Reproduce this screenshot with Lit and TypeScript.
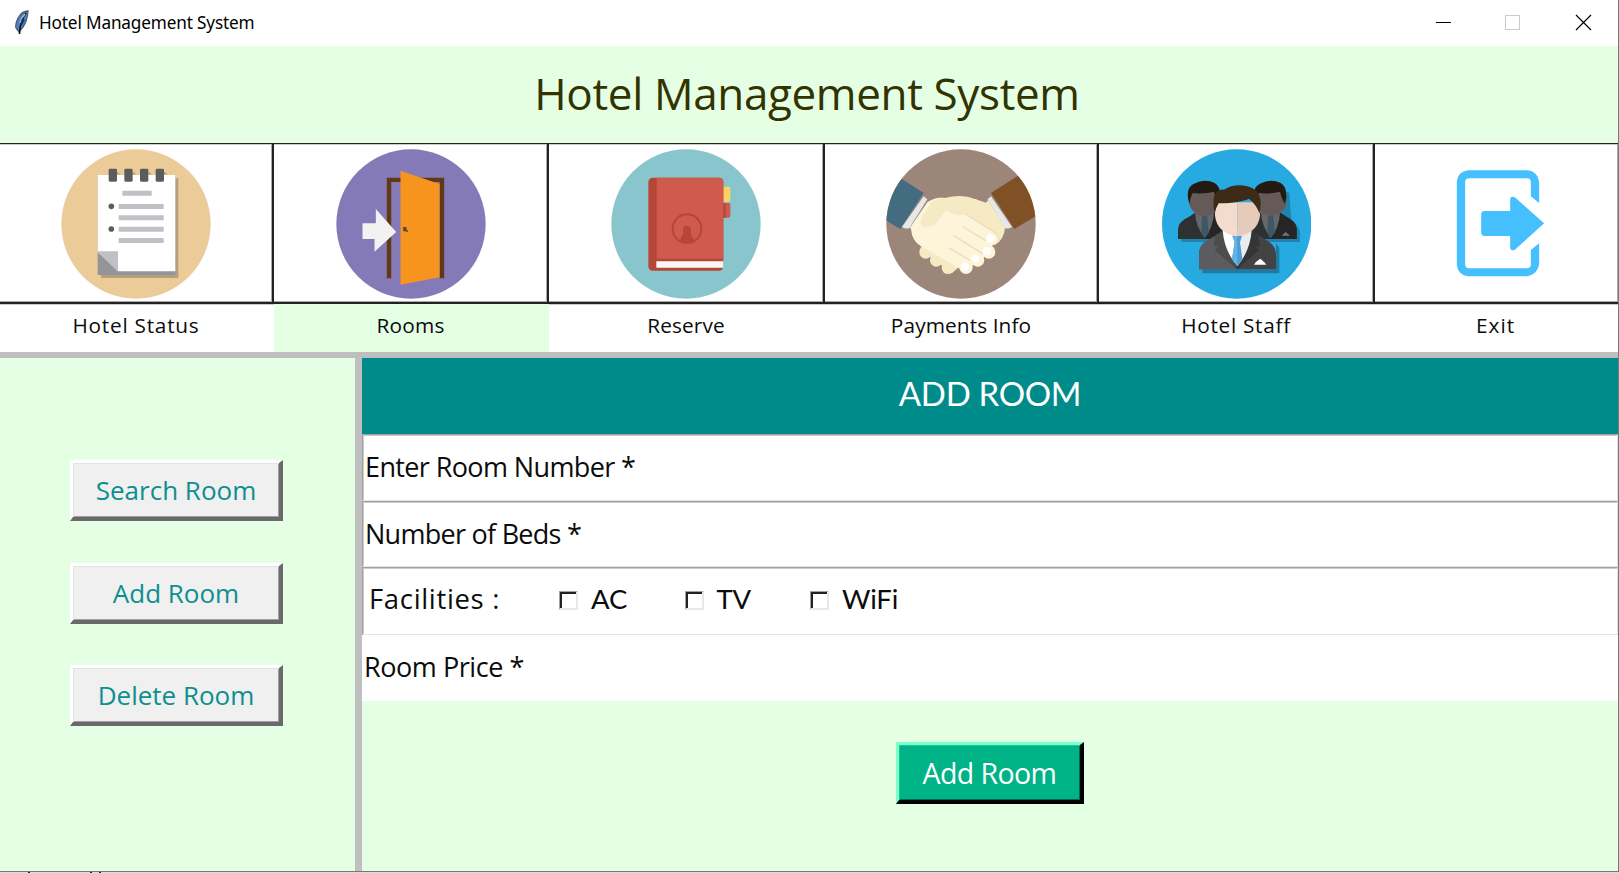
import { LitElement, html, svg, css } from "lit";
import { customElement } from "lit/decorators.js";

const notebook = html`<svg class="icon" viewBox="184 28 450 450">
  <circle cx="409" cy="253" r="224" fill="#ebcc98" />
  <path d="M304 116H536V415H304Z" fill="#b79f7b" />
  <path d="M294 106H527V406H294Z" fill="#94959a" />
  <path d="M294 106H527V395H355L294 336Z" fill="#fff" />
  <path d="M294 335H355V396Z" fill="#c0c0c5" />
  <path d="M351 98l12 6H351ZM399 98l12 6H399ZM446 98l12 6H446ZM493 98l12 6H493Z" fill="#a28d6d" />
  <g fill="#5b5c60">
    <rect x="327" y="87" width="25" height="39" rx="4" />
    <rect x="374" y="87" width="25" height="39" rx="4" />
    <rect x="421" y="87" width="25" height="39" rx="4" />
    <rect x="468" y="87" width="25" height="39" rx="4" />
    <circle cx="335" cy="200" r="8.5" />
    <circle cx="335" cy="268" r="8.5" />
  </g>
  <path d="M368 153H456V168H368ZM357 193H492V208H357ZM357 227H492V242H357ZM357 261H492V276H357ZM357 295H492V310H357Z" fill="#c0c0c5" />
</svg>`;

const door = html`<svg class="icon" viewBox="196.500 28 450 450">
  <circle cx="421.500" cy="253" r="224" fill="#857ab8" />
  <path d="M349 114H521V416H507V127H363V416H349Z" fill="#603813" />
  <path d="M363 127H507V416H363Z" fill="#857ab8" />
  <path d="M390 93L507 133V413L390 435Z" fill="#f7941e" />
  <path d="M398 262h10v7l5 6v3l-8-3h-7Z" fill="#5c4a33" />
  <path d="M276 251H316V208L377 277L312 336V298H276Z" fill="#f2f2f2" />
</svg>`;

const book = html`<svg class="icon" viewBox="200 28 450 450">
  <circle cx="425" cy="253" r="224" fill="#88c5cc" />
  <rect x="525" y="141" width="33" height="45" rx="5" fill="#fdd166" />
  <rect x="525" y="190" width="33" height="44" rx="5" fill="#cf5a4e" />
  <path d="M536 190h8v44h-8Z" fill="#b44738" />
  <rect x="312" y="114" width="225" height="279" rx="13" fill="#b44738" />
  <path d="M337 114H525a12 12 0 0 1 12 12V357H337Z" fill="#d05a4e" />
  <path d="M336 365H537V384H336Z" fill="#f7f7f7" />
  <circle cx="428" cy="267" r="43" fill="none" stroke="#b44738" stroke-width="6" />
  <circle cx="428" cy="270" r="12" fill="#b44738" />
  <path d="M420 274H436L449 302Q428 320 407 302Z" fill="#b44738" />
</svg>`;

const handshake = html`<svg class="icon" viewBox="198 28 450 450">
  <defs><clipPath id="disc"><circle cx="423" cy="253" r="224" /></clipPath></defs>
  <circle cx="423" cy="253" r="224" fill="#9c8679" />
  <g clip-path="url(#disc)">
    <path d="M245 117L311 160L241 268L190 238V180Z" fill="#446c80" />
    <path d="M594 108L513 160L583 268L655 225V180Z" fill="#805125" />
  </g>
  <path d="M311 170L322 179L268 266Q254 268 246 262Z" fill="#e6e7e8" />
  <path d="M513 170L503 179L554 266Q568 268 576 262Z" fill="#e6e7e8" />
  <g fill="#f6eac5">
    <circle cx="317" cy="338" r="19" />
    <circle cx="349" cy="362" r="19" />
    <circle cx="384" cy="384" r="19" />
    <path d="M304 320L420 380L396 400L300 330Z" />
    <path d="M326 188Q350 172 374 175Q425 161 465 178L498 189L504 181L555 264Q553 298 525 316L440 290L330 260Z" />
  </g>
  <g fill="#fdf4da">
    <path d="M322 188Q345 170 376 175L440 225L535 290L428 392L303 320Q276 305 273 268L270 264Z" />
    <circle cx="514" cy="296" r="20" />
    <circle cx="506" cy="337" r="20" />
    <circle cx="473" cy="361" r="20" />
    <circle cx="438" cy="383" r="20" />
    <path d="M440 225L528 281L512 338L473 366L438 392L420 388L400 300Z" />
  </g>
  <path d="M372 178H470L442 226Q404 231 379 212Q362 233 347 253Q326 268 309 260Q297 252 306 232L333 188Q350 173 374 175Z" fill="#f6eac5" />
  <path d="M440 225L520 275Q540 289 537 304M430 262L498 303M401 288L487 341M390 326L450 362" fill="none" stroke="#eadfba" stroke-width="4" stroke-linecap="round" />
  <g fill="#fff">
    <rect x="499" y="285" width="24" height="24" rx="9" transform="rotate(20 511 297)" />
    <rect x="489" y="322" width="23" height="23" rx="9" transform="rotate(20 500 333)" />
    <rect x="455" y="345" width="23" height="23" rx="9" transform="rotate(20 466 356)" />
    <rect x="424" y="369" width="23" height="23" rx="9" transform="rotate(20 435 380)" />
  </g>
</svg>`;

const backMan = svg`
  <path d="M250 298V268Q250 246 282 232L303 218H357L378 232Q408 246 408 268V298Z" fill="#2f3032" />
  <path d="M330 298V218H357L378 232Q408 246 408 268V298Z" fill="#262627" />
  <path d="M301 220H358Q355 265 330 295Q304 262 301 220Z" fill="#66676a" />
  <path d="M322 228H338L342 280L330 294L320 280Z" fill="#3f5666" />
  <ellipse cx="330" cy="185" rx="47" ry="43" fill="#655a57" />
  <path d="M284 192Q270 145 298 132Q330 116 360 130Q378 140 377 172L373 192Q364 180 358 156Q328 164 294 160Q286 175 284 192Z" fill="#231a12" />
`;

const staff = html`<svg class="icon" viewBox="199 28 450 450">
  <circle cx="426" cy="253" r="224" fill="#27aae1" />
  <path d="M260 298H370V307H260ZM500 307H616V275Q606 250 590 240L584 160L560 150V298H500Z" fill="#1f83ad" />
  ${backMan}
  <g transform="translate(198 0)">${backMan}</g>
  <path d="M561 288L573 277L586 288Z" fill="#777" />
  <path d="M323 389H544V310L554 325V401H323Z" fill="#1f7ba4" />
  <path d="M313 389V345Q313 315 340 302L380 276H476L516 302Q544 318 544 345V389Z" fill="#434343" />
  <path d="M313 389V345Q313 315 340 302L380 276H428V389Z" fill="#5c5b60" />
  <path d="M380 274L361 288L359 318L372 320L362 332L428 389L493 332L483 320L497 318L491 288L474 274Z" fill="#343635" />
  <path d="M361 288L359 318L372 320L362 332L425 387L385 274Z" fill="#4b4e4d" />
  <path d="M384 272H428V380Q388 332 384 272Z" fill="#fff" />
  <path d="M428 272H471Q467 332 428 380Z" fill="#e9ebf0" />
  <path d="M413 288H442L436 308L443 358L428 380L412 358L420 308Z" fill="#4c9cd6" />
  <path d="M413 288H428V380L412 358L420 308Z" fill="#65b0e5" />
  <path d="M361 188H428V290Q367 280 361 228Z" fill="#f3dccd" />
  <path d="M428 188H496V228Q489 280 428 290Z" fill="#e6cbbb" />
  <path d="M360 222Q350 175 365 158Q375 147 388 150Q412 135 440 137Q498 142 498 192L495 222Q485 195 463 177Q440 189 372 191Q363 205 360 222Z" fill="#3e2b17" />
  <path d="M478 375Q482 366 497 357Q509 366 515 375Z" fill="#fff" />
</svg>`;

const exit = html`<svg class="icon" viewBox="184.500 28 450 450">
  <path d="M511 170V128Q511 116 499 116H326Q314 116 314 128V374Q314 386 326 386H499Q511 386 511 374V331L536 311V374Q532 402 503 410H322Q293 406 289 377V125Q293 96 322 92H503Q532 97 536 127V190Z" fill="#46bfff" />
  <path d="M362 223Q363 214 372 214H449V178Q451 167 463 173L551 251L463 330Q451 336 449 324V289H372Q363 288 362 280Z" fill="#46bfff" />
</svg>`;

interface Tab { label: string; spacing: number; icon: unknown; active?: boolean; }
const tabs: Tab[] = [
  { label: "Hotel Status", spacing: 0.75, icon: notebook },
  { label: "Rooms", spacing: 0.2, icon: door, active: true },
  { label: "Reserve", spacing: 0.1, icon: book },
  { label: "Payments Info", spacing: 0.1, icon: handshake },
  { label: "Hotel Staff", spacing: 0.7, icon: staff },
  { label: "Exit", spacing: 1, icon: exit },
];

@customElement("app-root")
export class AppRoot extends LitElement {
  static styles = css`
    :host {
      display: block;
      height: 873px;
      overflow: hidden;
      background: #fff;
      color: #0c0c0c;
      font-family: "Open Sans", "Noto Sans", sans-serif;
      white-space: nowrap;
    }
    * { box-sizing: border-box; }
    .window {
      display: grid;
      grid-template-rows: 46px 97px 209px 6px 1fr;
      height: 872px;
      border-right: 1px solid #777;
      border-bottom: 1px solid #777;
    }
    .titlebar {
      display: flex;
      align-items: center;
      font: 17.2px/46px "Noto Sans", sans-serif;
      letter-spacing: -0.16px;
      color: #000;
    }
    .feather { width: 14px; height: 25px; margin: 0 10px 2px 15px; }
    .caption { flex: 1; }
    .controls { width: 183px; height: 46px; }
    .header {
      background: #e5ffe5;
      color: #333300;
      font-size: 44px;
      line-height: 95px;
      letter-spacing: -0.36px;
      text-align: center;
      padding-right: 4px;
    }
    .tabs { display: grid; grid-template-columns: 274px 275px 276px 274px 276px 1fr; }
    .tab { display: grid; grid-template-rows: 161px 48px; }
    .pic {
      display: flex;
      align-items: center;
      justify-content: center;
      border: solid #222;
      border-width: 1px 2px 2px 0;
      box-shadow: inset -1px -1px #aaa, inset 0 1px #ccc, 0 1px #ccc;
      padding-top: 1px;
    }
    .tab:last-child .pic { border-right: 0; }
    .icon { width: 150px; height: 150px; flex: none; }
    .name { font-size: 20.8px; line-height: 43px; text-align: center; padding-right: 2px; }
    .active .name { background: #e5ffe5; }
    .bar { background: #bfbfbf; }
    .body { display: grid; grid-template-columns: 355px 7px 1fr; background: #e5ffe5; }
    .side { padding: 102px 0 0 70px; display: flex; flex-direction: column; gap: 41.500px; }
    button {
      display: block;
      width: 213px;
      height: 61px;
      padding: 0;
      margin: 0;
      font: 26px/52px "Open Sans", sans-serif;
      color: #0c8f8f;
      background: #f0f0f0;
      border: solid;
      border-width: 3px 4px 4px 3px;
      border-color: #fff #696969 #696969 #fff;
      box-shadow: inset 1px 1px #e3e3e3, inset -1px -1px #a0a0a0;
    }
    .heading {
      height: 76px;
      background: #008b8b;
      color: #fff;
      font: 33px/70px "Lato", sans-serif;
      letter-spacing: -0.32px;
      text-align: center;
    }
    .row {
      background: #fff;
      font-size: 27px;
      border: 1px solid;
      border-color: #a0a0a0 #e3e3e3 #e3e3e3 #a0a0a0;
      box-shadow: inset 1px 1px #ccc;
      padding-left: 2px;
    }
    .number { height: 67px; line-height: 63px; letter-spacing: -0.62px; }
    .beds { height: 66px; line-height: 63px; letter-spacing: -0.73px; }
    .facilities { height: 68px; line-height: 62px; font-size: 27.5px; display: flex; }
    .facilities .lead { width: 194px; padding-left: 4px; letter-spacing: 0.66px; }
    .price { height: 66px; line-height: 62px; letter-spacing: -0.44px; border-color: #fff; box-shadow: none; padding-left: 1px; }
    .option { display: flex; width: 125.500px; gap: 13px; font-family: "Lato", sans-serif; letter-spacing: -0.2px; }
    .box {
      width: 19px;
      height: 19px;
      margin-top: 23px;
      border: solid;
      border-width: 1px 2px 2px 1px;
      border-color: #a0a0a0 #e8e8e8 #e8e8e8 #a0a0a0;
      box-shadow: inset 2px 2px #222;
    }
    .submit {
      width: 188px;
      height: 62px;
      margin: 41px auto 0;
      font-size: 28.5px;
      letter-spacing: -0.6px;
      color: #fff;
      background: #00b386;
      border-color: #7dffc8 #000 #000 #7dffc8;
      box-shadow: inset 1px 1px #1cc596, inset -1px -1px #00694f;
    }
    .under { display: flex; height: 1px; background: #ddd; }
    .tick { width: 2px; margin-left: 28px; background: #222; }
    .tick + .tick { margin-left: 60px; }
    .tick + .tick + .tick { margin-left: 7px; }
  `;

  render() {
    return html`
      <div class="window">
        <div class="titlebar">
          <svg class="feather" viewBox="0 0 14 25">
            <path d="M13 1Q7 1 3 8Q0 14 1 18L4 22L8 17Q12 12 13 1Z" fill="#4b82c4" stroke="#555c66" stroke-width="1.300" />
            <path d="M11 3Q5 10 4.500 24" fill="none" stroke="#111" stroke-width="1.600" />
            <path d="M10 4Q6 8 5 13" fill="none" stroke="#9cc7f2" stroke-width="1.200" />
            <path d="M9 9L6 15" stroke="#16386a" stroke-width="2" />
          </svg>
          <span class="caption">Hotel Management System</span>
          <svg class="controls" viewBox="0 0 183 46" fill="none">
            <path d="M1 22.500H16" stroke="#000" />
            <rect x="70.500" y="15.500" width="14" height="14" stroke="#ccc" />
            <path d="M141 15L156 30M156 15L141 30" stroke="#000" stroke-width="1.200" />
          </svg>
        </div>
        <div class="header">Hotel Management System</div>
        <div class="tabs">
          ${tabs.map((t) => html`
            <div class="tab ${t.active ? "active" : ""}">
              <div class="pic">${t.icon}</div>
              <div class="name" style="letter-spacing:${t.spacing}px">${t.label}</div>
            </div>`)}
        </div>
        <div class="bar"></div>
        <div class="body">
          <div class="side">
            <button>Search Room</button>
            <button>Add Room</button>
            <button>Delete Room</button>
          </div>
          <div class="bar"></div>
          <div class="main">
            <div class="heading">ADD ROOM</div>
            <div class="row number">Enter Room Number *</div>
            <div class="row beds">Number of Beds *</div>
            <div class="row facilities">
              <span class="lead">Facilities :</span>
              ${["AC", "TV", "WiFi"].map((o) => html`<span class="option"><span class="box"></span>${o}</span>`)}
            </div>
            <div class="row price">Room Price *</div>
            <button class="submit">Add Room</button>
          </div>
        </div>
      </div>
      <div class="under"><span class="tick"></span><span class="tick"></span><span class="tick"></span></div>
    `;
  }
}
